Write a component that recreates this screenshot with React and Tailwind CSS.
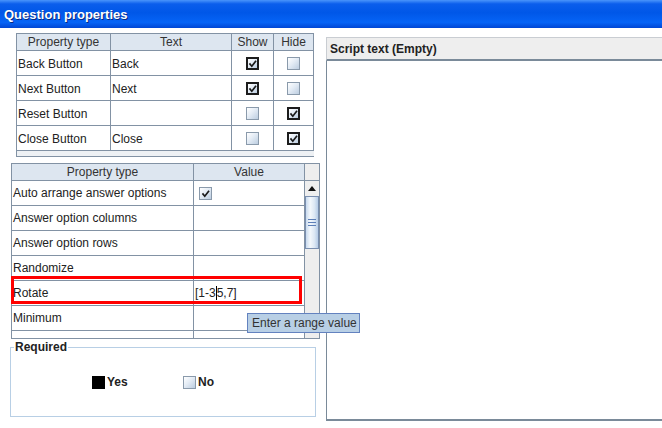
import React from "react";

function CheckMark() {
  return (
    <svg width="13" height="13" viewBox="0 0 13 13" className="absolute left-0 top-0">
      <path d="M4 7 L5.8 9.2 L9.5 4.5" fill="none" stroke="#1a1a1a" strokeWidth="1.7" strokeLinecap="square" />
    </svg>
  );
}

function Box({ checked, focus }) {
  return (
    <div
      className={
        "relative w-[13px] h-[13px] box-border bg-[linear-gradient(135deg,#ffffff_0%,#e4ecf5_45%,#bccde0_100%)] " +
        (focus ? "border-2 border-[#1c1c1c]" : "border border-[#8a9aab]")
      }
    >
      {checked && (
        <div className={"absolute " + (focus ? "-left-[2px] -top-[2px]" : "-left-[1px] -top-[1px]")}>
          <CheckMark />
        </div>
      )}
    </div>
  );
}

const topRows = [
  { type: "Back Button", text: "Back", show: true, hide: false },
  { type: "Next Button", text: "Next", show: true, hide: false },
  { type: "Reset Button", text: "", show: false, hide: true },
  { type: "Close Button", text: "Close", show: false, hide: true },
];

const propRows = [
  "Auto arrange answer options",
  "Answer option columns",
  "Answer option rows",
  "Randomize",
  "Rotate",
  "Minimum",
];

export default function App() {
  return (
    <div className="relative w-[662px] h-[428px] overflow-hidden bg-white font-['Liberation_Sans',Arial,sans-serif] text-[12px] text-[#222]">
      {/* Title bar */}
      <div className="h-[28px] flex items-center pl-[4px] pt-[2px] text-white font-bold text-[13px] [text-shadow:1px_1px_0_#0b2a80] bg-[linear-gradient(to_bottom,#4a95fb_0%,#0b5eec_14%,#0057e8_45%,#0664f6_80%,#0046d4_100%)]">
        Question properties
      </div>

      <div className="flex">
        {/* Left column */}
        <div className="w-[326px] flex flex-col">
          {/* Top table */}
          <div className="mt-[5px] ml-[16px] w-[298px] border-l border-t border-[#8292a4]">
            <div className="flex h-[17px] bg-[#dde6f0] text-[#333]">
              <div className="w-[94px] border-r border-b border-[#8292a4] flex items-center justify-center">Property type</div>
              <div className="w-[121px] border-r border-b border-[#8292a4] flex items-center justify-center">Text</div>
              <div className="w-[42px] border-r border-b border-[#8292a4] flex items-center justify-center">Show</div>
              <div className="w-[40px] border-r border-b border-[#8292a4] flex items-center justify-center">Hide</div>
            </div>
            {topRows.map((r) => (
              <div key={r.type} className="flex h-[25px]">
                <div className="w-[94px] border-r border-b border-[#8292a4] flex items-center pl-[1px] pt-[1px]">{r.type}</div>
                <div className="w-[121px] border-r border-b border-[#8292a4] flex items-center pl-[1px] pt-[1px]">{r.text}</div>
                <div className="w-[42px] border-r border-b border-[#8292a4] flex items-center justify-center">
                  <Box checked={r.show} focus={r.show} />
                </div>
                <div className="w-[40px] border-r border-b border-[#8292a4] flex items-center justify-center">
                  <Box checked={r.hide} focus={r.hide} />
                </div>
              </div>
            ))}
            <div className="h-[6px] bg-[#eef1f4] border-b border-[#8292a4]" />
          </div>

          {/* Property table */}
          <div className="mt-[6px] ml-[11px] w-[309px] h-[176px] flex border border-[#8292a4] overflow-hidden">
            <div className="w-[293px] flex flex-col">
              <div className="flex h-[17px] shrink-0 bg-[#dde6f0] text-[#333]">
                <div className="w-[182px] border-r border-b border-[#8292a4] flex items-center justify-center">Property type</div>
                <div className="w-[111px] border-r border-b border-[#8292a4] flex items-center justify-center">Value</div>
              </div>
              {propRows.map((p, i) => (
                <div key={p} className="flex h-[25px] shrink-0">
                  <div className="w-[182px] border-r border-b border-[#8292a4] flex items-center pl-[1px]">{p}</div>
                  <div className="w-[111px] border-r border-b border-[#8292a4] flex items-center pl-[1px]">
                    {i === 0 && (
                      <div className="ml-[4px]">
                        <Box checked />
                      </div>
                    )}
                    {p === "Rotate" && (
                      <span className="flex items-center">
                        [1-3<span className="inline-block w-px h-[14px] bg-black" />5,7]
                      </span>
                    )}
                  </div>
                </div>
              ))}
              <div className="flex h-[10px] shrink-0">
                <div className="w-[182px] border-r border-[#8292a4]" />
                <div className="w-[111px] border-r border-[#8292a4]" />
              </div>
            </div>
            {/* Scrollbar */}
            <div className="flex-1 flex flex-col bg-[#eeeeee]">
              <div className="h-[17px] shrink-0 border-b border-[#8292a4] bg-[#eeeeee]" />
              <div className="h-[15px] shrink-0 flex items-center justify-center">
                <svg width="8" height="5" viewBox="0 0 8 5">
                  <path d="M0 5 L4 0 L8 5 Z" fill="#111" />
                </svg>
              </div>
              <div className="h-[53px] shrink-0 border border-[#7a8fb0] bg-[linear-gradient(to_right,#c9dbef_0%,#f4f8fc_35%,#dde8f4_70%,#b6cce6_100%)] flex flex-col items-center justify-center gap-[2px]">
                <div className="w-[8px] h-px bg-[#5d7fb8]" />
                <div className="w-[8px] h-px bg-[#5d7fb8]" />
                <div className="w-[8px] h-px bg-[#5d7fb8]" />
              </div>
            </div>
          </div>

          {/* Required group */}
          <div className="relative mt-[8px] ml-[10px] w-[306px] h-[70px] border border-[#b8cfe5]">
            <span className="absolute -top-[8px] left-[3px] bg-white px-[1px] font-bold leading-[14px] text-[#222]">Required</span>
            <div className="flex items-center pt-[25px] pl-[81px]">
              <div className="w-[91px] flex items-center gap-[2px]">
                <div className="w-[13px] h-[13px] bg-black" />
                <span className="font-bold">Yes</span>
              </div>
              <div className="flex items-center gap-[2px]">
                <Box />
                <span className="font-bold">No</span>
              </div>
            </div>
          </div>
        </div>

        {/* Right panel */}
        <div className="flex-1 mt-[9px] h-[384px] flex flex-col">
          <div className="h-[24px] shrink-0 bg-[#eeeeee] border-t border-l border-[#c9cdd2] border-b-2 border-b-[#7a8a99] flex items-center pl-[3px] font-bold text-[#222]">
            Script text (Empty)
          </div>
          <div className="flex-1 bg-white border-l border-[#7a8a99] border-b-2 border-b-[#7a8a99]" />
        </div>
      </div>

      {/* Red highlight annotation */}
      <div className="absolute left-[11px] top-[276px] w-[291px] h-[28px] border-[3px] border-[#ff0000]" />

      {/* Tooltip */}
      <div className="absolute left-[247px] top-[313px] w-[113px] h-[20px] bg-[#b8cfe5] border border-[#6382bf] flex items-center pl-[4px] text-[#333]">
        Enter a range value
      </div>
    </div>
  );
}
